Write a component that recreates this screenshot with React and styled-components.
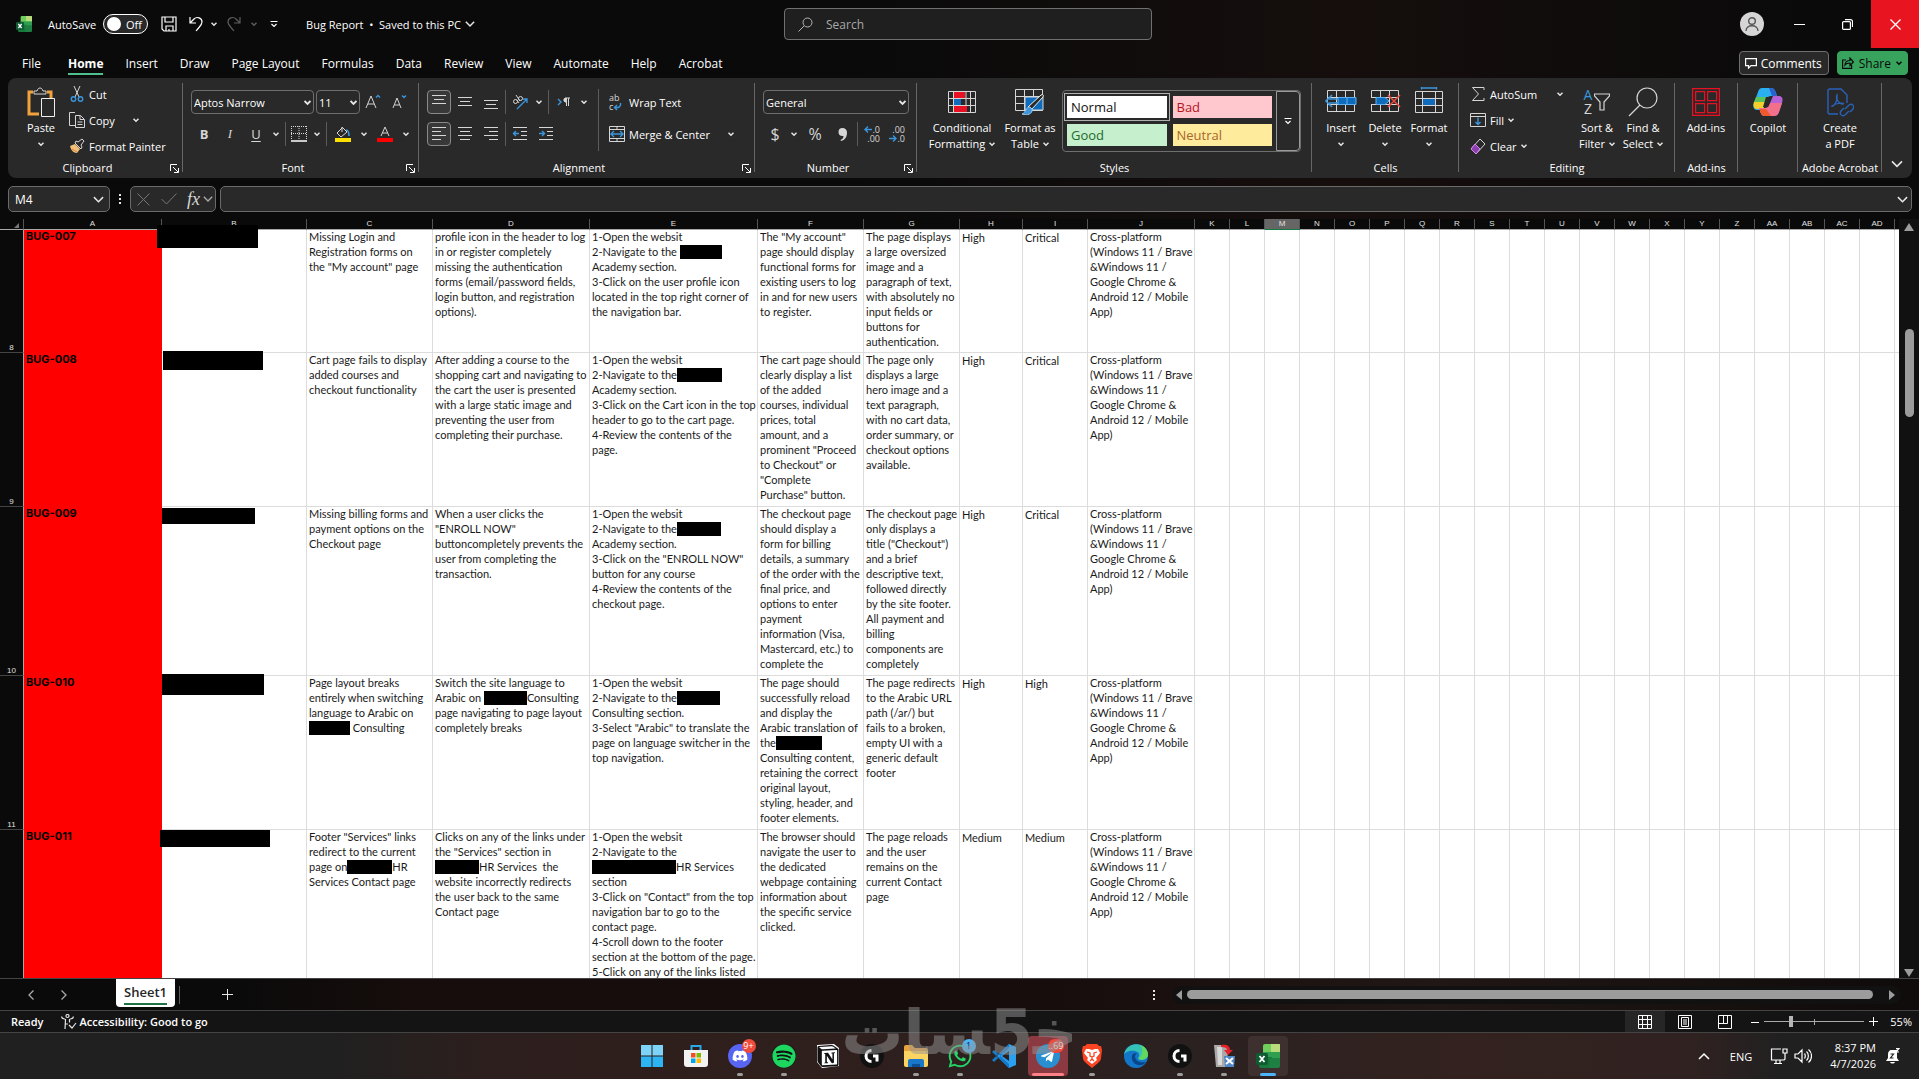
import React from "react";
import styled, { createGlobalStyle } from "styled-components";
import {
    FaDiscord,
    FaSpotify,
    FaWhatsapp,
    FaTelegramPlane,
} from "react-icons/fa";
import { SiNotion } from "react-icons/si";

const tabs = [
    "File",
    "Home",
    "Insert",
    "Draw",
    "Page Layout",
    "Formulas",
    "Data",
    "Review",
    "View",
    "Automate",
    "Help",
    "Acrobat",
];

const columns = [
    ["A", 138],
    ["B", 145],
    ["C", 126],
    ["D", 157],
    ["E", 168],
    ["F", 106],
    ["G", 96],
    ["H", 63],
    ["I", 65],
    ["J", 107],
    ..."K L M N O P Q R S T U V W X Y Z AA AB AC AD"
        .split(" ")
        .map((name) => [name, 35]),
];

const platform = [
    "Cross-platform",
    "(Windows 11 / Brave",
    "&Windows 11 /",
    "Google Chrome &",
    "Android 12 / Mobile",
    "App)",
];

// a line is a string, or a list of strings and widths of hidden words
const bugs = [
    {
        row: 8,
        height: 123,
        id: "BUG-007",
        mask: { left: -5, top: -5, width: 101, height: 23 },
        cells: [
            ["Missing Login and", "Registration forms on", 'the "My account" page'],
            [
                "profile icon in the header to log",
                "in or register completely",
                "missing the authentication",
                "forms (email/password fields,",
                "login button, and registration",
                "options).",
            ],
            [
                "1-Open the websit",
                ["2-Navigate to the ", 42],
                "Academy section.",
                "3-Click on the user profile icon",
                "located in the top right corner of",
                "the navigation bar.",
            ],
            [
                'The "My account"',
                "page should display",
                "functional forms for",
                "existing users to log",
                "in and for new users",
                "to register.",
            ],
            [
                "The page displays",
                "a large oversized",
                "image and a",
                "paragraph of text,",
                "with absolutely no",
                "input fields or",
                "buttons for",
                "authentication.",
            ],
            ["High"],
            ["Critical"],
            platform,
        ],
    },
    {
        row: 9,
        height: 154,
        id: "BUG-008",
        mask: { left: 1, top: -2, width: 100, height: 19 },
        cells: [
            ["Cart page fails to display", "added courses and", "checkout functionality"],
            [
                "After adding a course to the",
                "shopping cart and navigating to",
                "the cart the user is presented",
                "with a large static image and",
                "preventing the user from",
                "completing their purchase.",
            ],
            [
                "1-Open the websit",
                ["2-Navigate to the", 45],
                "Academy section.",
                "3-Click on the Cart icon in the top",
                "header to go to the cart page.",
                "4-Review the contents of the",
                "page.",
            ],
            [
                "The cart page should",
                "clearly display a list",
                "of the added",
                "courses, individual",
                "prices, total",
                "amount, and a",
                'prominent "Proceed',
                'to Checkout" or',
                '"Complete',
                'Purchase" button.',
            ],
            [
                "The page only",
                "displays a large",
                "hero image and a",
                "text paragraph,",
                "with no cart data,",
                "order summary, or",
                "checkout options",
                "available.",
            ],
            ["High"],
            ["Critical"],
            platform,
        ],
    },
    {
        row: 10,
        height: 169,
        id: "BUG-009",
        mask: { left: 0, top: 1, width: 93, height: 16 },
        cells: [
            ["Missing billing forms and", "payment options on the", "Checkout page"],
            [
                "When a user clicks the",
                '"ENROLL NOW"',
                "buttoncompletely prevents the",
                "user from completing the",
                "transaction.",
            ],
            [
                "1-Open the websit",
                ["2-Navigate to the", 44],
                "Academy section.",
                '3-Click on the "ENROLL NOW"',
                "button for any course",
                "4-Review the contents of the",
                "checkout page.",
            ],
            [
                "The checkout page",
                "should display a",
                "form for billing",
                "details, a summary",
                "of the order with the",
                "final price, and",
                "options to enter",
                "payment",
                "information (Visa,",
                "Mastercard, etc.) to",
                "complete the",
            ],
            [
                "The checkout page",
                "only displays a",
                'title ("Checkout")',
                "and a brief",
                "descriptive text,",
                "followed directly",
                "by the site footer.",
                "All payment and",
                "billing",
                "components are",
                "completely",
            ],
            ["High"],
            ["Critical"],
            platform,
        ],
    },
    {
        row: 11,
        height: 154,
        id: "BUG-010",
        mask: { left: 0, top: -2, width: 102, height: 21 },
        cells: [
            [
                "Page layout breaks",
                "entirely when switching",
                "language to Arabic on",
                [41, " Consulting"],
            ],
            [
                "Switch the site language to",
                ["Arabic on ", 43, "Consulting"],
                "page navigating to page layout",
                "completely breaks",
            ],
            [
                "1-Open the websit",
                ["2-Navigate to the", 43],
                "Consulting section.",
                '3-Select "Arabic" to translate the',
                "page on language switcher in the",
                "top navigation.",
            ],
            [
                "The page should",
                "successfully reload",
                "and display the",
                "Arabic translation of",
                ["the", 46],
                "Consulting content,",
                "retaining the correct",
                "original layout,",
                "styling, header, and",
                "footer elements.",
            ],
            [
                "The page redirects",
                "to the Arabic URL",
                "path (/ar/) but",
                "fails to a broken,",
                "empty UI with a",
                "generic default",
                "footer",
            ],
            ["High"],
            ["High"],
            platform,
        ],
    },
    {
        height: 169,
        id: "BUG-011",
        mask: { left: -2, top: 0, width: 110, height: 17 },
        cells: [
            [
                'Footer "Services" links',
                "redirect to the current",
                ["page on", 45, "HR"],
                "Services Contact page",
            ],
            [
                "Clicks on any of the links under",
                'the "Services" section in',
                [44, "HR Services  the"],
                "website incorrectly redirects",
                "the user back to the same",
                "Contact page",
            ],
            [
                "1-Open the websit",
                "2-Navigate to the",
                [84, "HR Services"],
                "section",
                '3-Click on "Contact" from the top',
                "navigation bar to go to the",
                "contact page.",
                "4-Scroll down to the footer",
                "section at the bottom of the page.",
                "5-Click on any of the links listed",
            ],
            [
                "The browser should",
                "navigate the user to",
                "the dedicated",
                "webpage containing",
                "information about",
                "the specific service",
                "clicked.",
            ],
            [
                "The page reloads",
                "and the user",
                "remains on the",
                "current Contact",
                "page",
            ],
            ["Medium"],
            ["Medium"],
            platform,
        ],
    },
];

function Icon({ w = 16, h = w, box, children, sw = 1, color = "#d6d6d6" }) {
    return (
        <Svg
            width={w}
            height={h}
            viewBox={box || `0 0 ${w} ${h}`}
            fill="none"
            stroke={color}
            strokeWidth={sw}
            aria-hidden="true"
        >
            {children}
        </Svg>
    );
}

function Chevron({ size = 6, color = "#e6e6e6", sw = 1.5 }) {
    return (
        <Icon w={size} h={size} box="0 0 6 6" sw={sw} color={color}>
            <path d="M.5 1.7 3 4.2l2.5-2.5" />
        </Icon>
    );
}

function Drop({ label }) {
    return (
        <DropButton aria-label={label}>
            <Chevron />
        </DropButton>
    );
}

function ExcelLogo({ size }) {
    return (
        <Icon w={size} box="0 0 24 24" sw={0}>
            <path d="M7 2a2 2 0 0 1 2-2h14a1 1 0 0 1 1 1v8H7z" fill="#6fcf5c" />
            <path d="M15 0h8a1 1 0 0 1 1 1v8h-9z" fill="#b8dc7c" />
            <path d="M7 8h17v8H7z" fill="#2f9e4f" />
            <path d="M3 13h13v11H5a2 2 0 0 1-2-2z" fill="#157a3c" />
            <path d="M14 14h10v8a2 2 0 0 1-2 2h-8z" fill="#1f8044" />
            <rect y="9" width="12" height="12" rx="2" fill="#0f5c33" />
            <path d="m3.5 12 5 6m0-6-5 6" stroke="#fff" strokeWidth="1.8" />
        </Icon>
    );
}

function Lines({ top, rows }) {
    return (
        <Icon w={16}>
            {rows.map(([x, width], i) => (
                <path key={i} d={`M${x} ${top + i * 4 + 0.5}h${width}`} />
            ))}
        </Icon>
    );
}

function Launcher({ label }) {
    return (
        <LauncherButton aria-label={label}>
            <Icon w={9} color="#fff">
                <path d="M.5 7V.5H7M3 3l5 5M8.5 4v4.5H4" />
            </Icon>
        </LauncherButton>
    );
}

function Group({ name, width, launcher, children }) {
    return (
        <GroupBox $w={width}>
            <GroupBody>{children}</GroupBody>
            <GroupName $launcher={launcher}>
                {name}
                {launcher && <Launcher label={`${name} settings`} />}
            </GroupName>
        </GroupBox>
    );
}

function Combo({ label, value, width }) {
    return (
        <ComboBox $w={width}>
            <select aria-label={label} defaultValue={value}>
                <option>{value}</option>
            </select>
            <Chevron size={7} />
        </ComboBox>
    );
}

function Big({ icon, top, bottom, width, drop }) {
    return (
        <BigButton $w={width}>
            <BigIcon>{icon}</BigIcon>
            <span>{top}</span>
            <span>
                {bottom}
                {drop && <Chevron />}
            </span>
        </BigButton>
    );
}

function TitleBar() {
    return (
        <TitleRow>
            <TitleLeft>
                <ExcelLogo size={16} />
                <AutoSave>
                    AutoSave
                    <Toggle>
                        <input type="checkbox" aria-label="AutoSave" />
                        Off
                    </Toggle>
                </AutoSave>
                <QuickButton aria-label="Save" $w={32}>
                    <Icon w={16} color="#fff" sw={1.2}>
                        <path d="M1 1h14v14H3l-2-2zM4 1v5h8V1M5 15v-5h7v5M8 13v2" />
                    </Icon>
                </QuickButton>
                <QuickButton aria-label="Undo" $w={22}>
                    <Icon w={16} color="#fff" sw={1.2}>
                        <path d="M2 1v6h6M2 7l4-4c3-3 8-1 8 3 0 3-2 4-6 9" />
                    </Icon>
                </QuickButton>
                <Drop label="Undo list" />
                <QuickButton aria-label="Redo" $w={26}>
                    <Icon w={16} color="#5c5c5c" sw={1.2}>
                        <path d="M14 1v6H8m6 0-4-4C7 0 2 2 2 6c0 3 2 4 6 9" />
                    </Icon>
                </QuickButton>
                <DropButton aria-label="Redo list">
                    <Chevron color="#5c5c5c" />
                </DropButton>
                <QuickButton aria-label="Customize toolbar" $w={26}>
                    <Icon w={8} color="#fff" sw={1.2}>
                        <path d="M.5 1.5h7M1.5 4 4 6.5 6.5 4" />
                    </Icon>
                </QuickButton>
                <FileName>
                    Bug Report&nbsp; • &nbsp;Saved to this PC
                    <Chevron size={10} sw={0.9} />
                </FileName>
            </TitleLeft>
            <SearchBox>
                <Icon w={15} color="#b5b5b5">
                    <circle cx="9.5" cy="5.5" r="4.5" />
                    <path d="M6 9 .5 14.5" />
                </Icon>
                <input type="search" aria-label="Search" placeholder="Search" />
            </SearchBox>
            <WindowButtons>
                <Avatar aria-label="Account">
                    <Icon w={14} color="#555" sw={1.4}>
                        <circle cx="7" cy="4" r="3.3" />
                        <path d="M1 14c0-7 12-7 12 0" />
                    </Icon>
                </Avatar>
                <WindowButton aria-label="Minimize">
                    <Icon w={11} color="#fff">
                        <path d="M0 5.5h11" />
                    </Icon>
                </WindowButton>
                <WindowButton aria-label="Restore">
                    <Icon w={11} color="#fff" sw={1.2}>
                        <rect x=".6" y="2.6" width="7.8" height="7.8" rx="1" />
                        <path d="M3 .6h5.5a2 2 0 0 1 2 2V8" />
                    </Icon>
                </WindowButton>
                <WindowButton aria-label="Close" $close>
                    <Icon w={11} color="#fff" sw={1.3}>
                        <path d="m.5.5 10 10m0-10-10 10" />
                    </Icon>
                </WindowButton>
            </WindowButtons>
        </TitleRow>
    );
}

function ClipboardGroup() {
    return (
        <Group name="Clipboard" width={175} launcher>
            <Inset $left={11}>
                <Big
                    width={44}
                    top="Paste"
                    drop
                    icon={
                        <Icon w={28} h={30}>
                            <path d="M6 5H2v22h10M20 5h4v6" stroke="#f0a23c" strokeWidth="3" />
                            <path d="M7 7V4h3c1-4 5-4 6 0h3v3z" fill="#292929" />
                            <path d="M14.5 11.5h13v18h-13z" fill="#292929" stroke="#eee" />
                        </Icon>
                    }
                />
            </Inset>
            <SmallColumn $left={6}>
                <SmallButton>
                    <Icon w={16}>
                        <path d="m5 0 5 11M11 0 6 11" />
                        <circle cx="4.5" cy="13" r="2.2" stroke="#3a96dd" strokeWidth="1.4" />
                        <circle cx="11.5" cy="13" r="2.2" stroke="#3a96dd" strokeWidth="1.4" />
                    </Icon>
                    Cut
                </SmallButton>
                <SmallButton $gap={14}>
                    <Icon w={16}>
                        <path d="M6 13.5H.5V.5H6M6.5 3.5h5l4 4v8h-9zM11 3.5v4h4M8.5 10h5M8.5 12.5h5" />
                    </Icon>
                    Copy
                    <Chevron />
                </SmallButton>
                <SmallButton>
                    <Icon w={16}>
                        <path d="M1 8l5-2 5 5-3 4c-4 0-6-3-7-7z" fill="#f0c07a" stroke="none" />
                        <path d="m6 5 6 6 1-2-1-2 3-4-2-2-4 3-2-1z" />
                        <path d="m3 11 5 3" stroke="#d9822b" />
                    </Icon>
                    Format Painter
                </SmallButton>
            </SmallColumn>
        </Group>
    );
}

function FontGroup() {
    return (
        <Group name="Font" width={236} launcher>
            <ToolRows $left={8}>
                <ToolRow>
                    <Combo label="Font" value="Aptos Narrow" width={123} />
                    <Combo label="Font size" value="11" width={44} />
                    <ToolButton aria-label="Increase font size" $w={26}>
                        <Icon w={16}>
                            <path d="M1 14 6 2l5 12M3 10h6" />
                            <path d="m11 3.5 2-2 2 2" stroke="#3a96dd" strokeWidth="1.3" />
                        </Icon>
                    </ToolButton>
                    <ToolButton aria-label="Decrease font size" $w={26}>
                        <Icon w={16}>
                            <path d="M2 14 6 4l4 10M3.5 11h5" />
                            <path d="m11 1.5 2 2 2-2" stroke="#3a96dd" strokeWidth="1.3" />
                        </Icon>
                    </ToolButton>
                </ToolRow>
                <ToolRow>
                    <Letter $w={26} $bold>B</Letter>
                    <Letter $w={26} $italic>I</Letter>
                    <Letter $w={26} $underline>U</Letter>
                    <Drop label="Underline style" />
                    <Sep />
                    <ToolButton aria-label="Borders" $w={22}>
                        <Icon w={16}>
                            <path d="M.5 0v14M15.5 0v14M8 0v14M0 .5h16M0 7.5h16" strokeDasharray="1 1" />
                            <path d="M0 15h16" stroke="#fff" strokeWidth="1.5" />
                        </Icon>
                    </ToolButton>
                    <Drop label="Border style" />
                    <Sep />
                    <ToolButton aria-label="Fill color" $w={28}>
                        <Icon w={16}>
                            <path d="M7 2 2 7l4 4 6-5-5-5v5" />
                            <path d="M11 4c3 0 3 3 3 6" stroke="#3a96dd" strokeWidth="1.6" />
                            <path d="M0 14h16" stroke="#fce100" strokeWidth="4" />
                        </Icon>
                    </ToolButton>
                    <Drop label="Fill colors" />
                    <ToolButton aria-label="Font color" $w={28}>
                        <Icon w={16}>
                            <path d="m4 10 4-9 4 9M5.5 7h5" />
                            <path d="M0 14h16" stroke="#f00" strokeWidth="4" />
                        </Icon>
                    </ToolButton>
                    <Drop label="Font colors" />
                </ToolRow>
            </ToolRows>
        </Group>
    );
}

function AlignmentGroup() {
    return (
        <Group name="Alignment" width={336} launcher>
            <ToolRows $left={8}>
                <ToolRow>
                    <ToolButton aria-label="Top align" $w={24} $on>
                        <Lines top={1} rows={[[1, 14], [3, 10], [1, 14]]} />
                    </ToolButton>
                    <ToolButton aria-label="Middle align" $w={28}>
                        <Lines top={3} rows={[[1, 14], [3, 10], [1, 14]]} />
                    </ToolButton>
                    <ToolButton aria-label="Bottom align" $w={24}>
                        <Lines top={6} rows={[[1, 14], [3, 10], [1, 14]]} />
                    </ToolButton>
                    <Sep />
                    <ToolButton aria-label="Orientation" $w={24}>
                        <Icon w={16}>
                            <circle cx="3.5" cy="7.5" r="2" />
                            <path d="m5 6 2 3M4 1l4 6" />
                            <circle cx="8.5" cy="4.5" r="2" />
                            <path d="M5 15 15 5M11 5h4v4" stroke="#3a96dd" strokeWidth="1.3" />
                        </Icon>
                    </ToolButton>
                    <Drop label="Orientation list" />
                    <Sep />
                    <ToolButton aria-label="Text direction" $w={26}>
                        <Icon w={16}>
                            <path d="m2 5 3 3-3 3" stroke="#3a96dd" strokeWidth="1.4" />
                            <path d="M14 4h-4a2 2 0 0 0 0 4M10.5 4v8M12.5 4v8" />
                            <path d="M10 4v4a2 2 0 0 1 0-4z" fill="#d6d6d6" />
                        </Icon>
                    </ToolButton>
                    <Drop label="Text directions" />
                </ToolRow>
                <ToolRow>
                    <ToolButton aria-label="Align left" $w={24} $on>
                        <Lines top={1} rows={[[1, 14], [1, 9], [1, 14], [1, 9]]} />
                    </ToolButton>
                    <ToolButton aria-label="Center" $w={28}>
                        <Lines top={1} rows={[[1, 14], [3, 10], [1, 14], [3, 10]]} />
                    </ToolButton>
                    <ToolButton aria-label="Align right" $w={24}>
                        <Lines top={1} rows={[[1, 14], [6, 9], [1, 14], [6, 9]]} />
                    </ToolButton>
                    <Sep />
                    <ToolButton aria-label="Decrease indent" $w={24}>
                        <Icon w={16}>
                            <path d="M1 1.5h14M9 5.5h6M9 9.5h6M1 13.5h14" />
                            <path d="M7 7.5H1M4 5 1.5 7.5 4 10" stroke="#3a96dd" strokeWidth="1.4" />
                        </Icon>
                    </ToolButton>
                    <ToolButton aria-label="Increase indent" $w={28}>
                        <Icon w={16}>
                            <path d="M1 1.5h14M9 5.5h6M9 9.5h6M1 13.5h14" />
                            <path d="M1 7.5h6M4 5l2.5 2.5L4 10" stroke="#3a96dd" strokeWidth="1.4" />
                        </Icon>
                    </ToolButton>
                </ToolRow>
            </ToolRows>
            <LongSep />
            <ToolRows $left={10}>
                <ToolRow>
                    <SmallButton>
                        <TextIcon>
                            <span>ab</span>
                            <span>
                                c
                                <Icon w={9} h={8} color="#3a96dd" sw={1.4}>
                                    <path d="M7.5 0v2.5L5.5 4.5h-4M4 2 1.5 4.5 4 7" />
                                </Icon>
                            </span>
                        </TextIcon>
                        Wrap Text
                    </SmallButton>
                </ToolRow>
                <ToolRow>
                    <SmallButton $gap={14}>
                        <Icon w={16}>
                            <path d="M.5.5h15v15H.5zM8 0v3M8 13v3M0 3.5h16M0 12.5h16" />
                            <path d="M2 8h12M5 5 2 8l3 3M11 5l3 3-3 3" stroke="#3a96dd" strokeWidth="1.4" />
                        </Icon>
                        Merge &amp; Center
                        <Chevron />
                    </SmallButton>
                </ToolRow>
            </ToolRows>
        </Group>
    );
}

function Arrow({ left }) {
    return (
        <Icon w={8} h={7} color="#3a96dd" sw={1.4}>
            <path d={left ? "M8 3.5H1M4 .5l-3 3 3 3" : "M0 3.5h7M4 .5l3 3-3 3"} />
        </Icon>
    );
}

function NumberGroup() {
    return (
        <Group name="Number" width={162} launcher>
            <ToolRows $left={8}>
                <ToolRow>
                    <Combo label="Number format" value="General" width={146} />
                </ToolRow>
                <ToolRow>
                    <Letter $w={24} $size={16}>$</Letter>
                    <Drop label="Currencies" />
                    <Letter $w={28} $size={16}>%</Letter>
                    <ToolButton aria-label="Comma style" $w={26}>
                        <Icon w={9} h={13} color="none">
                            <path
                                d="M4.5 0a4 4 0 0 0 0 8h1c0 2-1 3-3 4l.5 1c4-1 6-4 6-8.5C9 1.5 7 0 4.5 0z"
                                fill="#d6d6d6"
                            />
                        </Icon>
                    </ToolButton>
                    <Sep />
                    <ToolButton aria-label="Increase decimal" $w={24}>
                        <TextIcon $end>
                            <span><Arrow left />.0</span>
                            <span>.00</span>
                        </TextIcon>
                    </ToolButton>
                    <ToolButton aria-label="Decrease decimal" $w={26}>
                        <TextIcon $end>
                            <span>.00</span>
                            <span><Arrow />.0</span>
                        </TextIcon>
                    </ToolButton>
                </ToolRow>
            </ToolRows>
        </Group>
    );
}

function StylesGroup() {
    return (
        <Group name="Styles" width={395}>
            <Inset $left={5}>
                <Big
                    width={80}
                    top="Conditional"
                    bottom="Formatting"
                    drop
                    icon={
                        <Icon w={28} h={22}>
                            <path d="M.5.5h27v21H.5zM.5 7.5h27M.5 14.5h27M5.5 0v22M18 0v22M22.5 0v22" />
                            <path d="M6 1h11v6H6zM6 15h13v6H6z" fill="#e81123" stroke="none" />
                            <path d="M6 8h7v6H6z" fill="#0f6cbd" stroke="none" />
                        </Icon>
                    }
                />
                <Big
                    width={56}
                    top="Format as"
                    bottom="Table"
                    drop
                    icon={
                        <Icon w={30} h={26} box="0 -2 30 26">
                            <path d="M.5-1.5h27v21H.5zM.5 5.5h27M.5 12.5h27M9.5-2v22M18.5-2v22" />
                            <path d="M10 6h18v13H10z" fill="#0f6cbd" />
                            <path d="M28 6 16 19l-3-3L26 4c2-1 3 0 2 2z" fill="#292929" stroke="#eee" />
                            <path d="M15 16c-4-1-4 6-8 7 5 2 11 0 10-5z" fill="#3a96dd" stroke="#9cc8ee" />
                        </Icon>
                    }
                />
            </Inset>
            <Gallery>
                <GalleryTiles>
                    <StyleTile $bg="#ffffff" $color="#111" $on>Normal</StyleTile>
                    <StyleTile $bg="#ffc7ce" $color="#b3151c">Bad</StyleTile>
                    <StyleTile $bg="#c6efce" $color="#1c6b2c">Good</StyleTile>
                    <StyleTile $bg="#ffeb9c" $color="#a8662a">Neutral</StyleTile>
                </GalleryTiles>
                <GalleryMore aria-label="More styles">
                    <Icon w={8} color="#fff" sw={1.2}>
                        <path d="M.5 1.5h7M1.5 4 4 6.5 6.5 4" />
                    </Icon>
                </GalleryMore>
            </Gallery>
        </Group>
    );
}

function CellsGroup() {
    const table = "M2.5 3.5h27v21h-27zM2.5 10.5h27M2.5 17.5h27M11.5 3v22M20.5 3v22";
    return (
        <Group name="Cells" width={147}>
            <Inset $left={7}>
                <Big
                    width={44}
                    top="Insert"
                    drop
                    icon={
                        <Icon w={32} h={30}>
                            <path d={table} />
                            <path d="M13 10.5h18v7H13zM22 10v7" fill="#0f6cbd" stroke="#5fb0f0" />
                            <path d="M14 12H4m10 4H4M7 8l-6 6 6 6" stroke="#3a96dd" strokeWidth="1.6" />
                        </Icon>
                    }
                />
                <Big
                    width={44}
                    top="Delete"
                    drop
                    icon={
                        <Icon w={32} h={30}>
                            <path d={table} />
                            <path d="M1 11h5v6H1z" fill="#292929" stroke="none" />
                            <path d="M7 10.5h9l4 3.5-4 3.5H7z" fill="#0f6cbd" stroke="#5fb0f0" />
                            <path d="m19 8 12 12M31 8 19 20" stroke="#f0483e" strokeWidth="1.5" />
                        </Icon>
                    }
                />
                <Big
                    width={44}
                    top="Format"
                    drop
                    icon={
                        <Icon w={30} h={30} box="1 1 30 30">
                            <path d="M2.5 5.5h27v21h-27zM2.5 12.5h27M2.5 19.5h27M9.5 5v22M22.5 5v22" />
                            <path d="M10 13h12v6H10z" fill="#0f6cbd" stroke="none" />
                            <path d="M8 2h16M8.5 1v2.5M23.5 1v2.5" stroke="#3a96dd" strokeWidth="1.4" />
                        </Icon>
                    }
                />
            </Inset>
        </Group>
    );
}

function EditingGroup() {
    return (
        <Group name="Editing" width={216}>
            <SmallColumn $left={11} $w={104}>
                <SmallButton $gap={16}>
                    <Icon w={16}>
                        <path d="M14 4V1.5H2.5L8.5 8l-6 6.5H14V12" />
                    </Icon>
                    AutoSum
                    <Chevron />
                </SmallButton>
                <SmallButton>
                    <Icon w={16}>
                        <path d="M.5 1.5h15v13H.5zM.5 4.5h15" />
                        <path d="M8 5.5v7M5.5 10 8 12.5l2.5-2.5" stroke="#3a96dd" strokeWidth="1.4" />
                    </Icon>
                    Fill
                    <Chevron />
                </SmallButton>
                <SmallButton>
                    <Icon w={16}>
                        <path d="m1 11 9-10 5 5-9 10z" />
                        <path d="m1 11 4-5 5 5-4 5z" fill="#8b3fb0" stroke="#d58ae8" />
                    </Icon>
                    Clear
                    <Chevron />
                </SmallButton>
            </SmallColumn>
            <Big
                width={46}
                top="Sort &"
                bottom="Filter"
                drop
                icon={
                    <SortIcon>
                        <p>
                            <b>A</b>
                            <br />Z
                        </p>
                        <Icon w={16} h={18} sw={1.2}>
                            <path d="M.5 1h15v2l-5.5 6v8H6V9L.5 3z" />
                        </Icon>
                    </SortIcon>
                }
            />
            <Big
                width={46}
                top="Find &"
                bottom="Select"
                drop
                icon={
                    <Icon w={30} sw={1.2}>
                        <circle cx="19" cy="11" r="10" />
                        <path d="M12 18 1 29" />
                    </Icon>
                }
            />
        </Group>
    );
}

function Ribbon() {
    return (
        <RibbonBox>
            <ClipboardGroup />
            <FontGroup />
            <AlignmentGroup />
            <NumberGroup />
            <StylesGroup />
            <CellsGroup />
            <EditingGroup />
            <Group name="Add-ins" width={63}>
                <Big
                    width={62}
                    top="Add-ins"
                    icon={
                        <Icon w={28} color="#e81123" sw={1.2}>
                            <path d="M.6.6h26.8v26.8H.6zM3.6 3.6h9v9h-9zM15.6 3.6h9v9h-9zM3.6 15.6h9v9h-9zM15.6 15.6h9v9h-9z" />
                        </Icon>
                    }
                />
            </Group>
            <Group name="" width={60}>
                <Big
                    width={60}
                    top="Copilot"
                    icon={
                        <Icon w={30} h={28} sw={0}>
                            <path d="M9 0h9c3 0 4 2 5 5l1 3h-6c-3 0-4 2-5 5l-3 9H4c-4 0-4-4-3-7L5 4c1-3 2-4 4-4z" fill="#2ab0f0" />
                            <path d="M3 9h12l-5 12H4c-4 0-4-4-3-7z" fill="#5cc25a" />
                            <path d="M1 14h11l-2 7H4c-3 0-4-3-3-7z" fill="#f5d02c" />
                            <path d="M20 8h6c4 0 4 4 3 7l-3 9c-1 3-3 4-5 4h-9c-3 0-4-2-5-5l-1-3h6c3 0 4-2 5-5z" fill="#b562d8" />
                            <path d="M17 15h12l-3 9c-1 3-3 4-5 4h-9c-3 0-4-2-5-5l-1-3h6c3 0 4-2 5-5z" fill="#f2708c" />
                            <path d="M7 21h6l5 7h-6c-3 0-4-2-5-5z" fill="#ee5a2c" />
                            <path d="m13 9-3 10h5c1-1 3-8 4-10z" fill="#292929" />
                            <path d="M16 0h2c3 0 4 2 5 5l1 3h-5z" fill="#2a62d0" />
                        </Icon>
                    }
                />
            </Group>
            <Group name="Adobe Acrobat" width={84}>
                <Big
                    width={84}
                    top="Create"
                    bottom="a PDF"
                    icon={
                        <Icon w={28} h={30} color="#2a62b8" sw={1.4}>
                            <path d="M12 27H4a2 2 0 0 1-2-2V4a2 2 0 0 1 2-2h11l6 6v8" />
                            <path d="M11 8c-2 4 3 10 6 9s-6-2-11 2c2 1 6-6 5-11z" />
                            <path d="m19 22 4-4c3-2 6 1 4 4l-3 3M23 24l-4 4c-3 2-6-1-4-4l3-3" />
                        </Icon>
                    }
                />
            </Group>
            <Collapse aria-label="Collapse ribbon">
                <Chevron size={12} sw={0.8} />
            </Collapse>
        </RibbonBox>
    );
}

function FormulaBar() {
    return (
        <FormulaRow>
            <NameBox>
                <input aria-label="Name box" defaultValue="M4" />
                <Chevron size={11} sw={0.8} />
            </NameBox>
            <Dots>
                <i />
                <i />
                <i />
            </Dots>
            <FormulaTools>
                <button aria-label="Cancel">
                    <Icon w={13} color="#777">
                        <path d="m.5.5 12 12m0-12-12 12" />
                    </Icon>
                </button>
                <button aria-label="Enter">
                    <Icon w={16} h={12} color="#777">
                        <path d="m.5 6 5 5L15.5.5" />
                    </Icon>
                </button>
                <button aria-label="Insert function">
                    <em>fx</em>
                    <Chevron size={10} sw={0.8} color="#aaa" />
                </button>
            </FormulaTools>
            <FormulaInput>
                <input aria-label="Formula" />
                <Chevron size={11} sw={0.8} />
            </FormulaInput>
        </FormulaRow>
    );
}

function CellText({ content }) {
    return content.map((line, i) => (
        <TextLine key={i}>
            {[].concat(line).map((part, n) =>
                typeof part === "number" ? <Redacted key={n} $w={part} /> : part
            )}
        </TextLine>
    ));
}

function Sheet() {
    return (
        <SheetArea>
            <SheetScroll>
                <Table>
                    <colgroup>
                        <Col $w={24} />
                        {columns.map(([name, width]) => (
                            <Col key={name} $w={width} />
                        ))}
                        <Col $w={35} />
                    </colgroup>
                    <thead>
                        <tr>
                            <Corner aria-label="Select all">
                                <Icon w={5} color="none">
                                    <path d="M5 0v5H0z" fill="#777" />
                                </Icon>
                            </Corner>
                            {columns.map(([name]) => (
                                <ColHead key={name} $active={name === "M"}>
                                    {name}
                                </ColHead>
                            ))}
                            <ColHead />
                        </tr>
                    </thead>
                    <tbody>
                        {bugs.map((bug) => (
                            <Row key={bug.id} $h={bug.height}>
                                <RowHead>{bug.row}</RowHead>
                                <IdCell>{bug.id}</IdCell>
                                <Cell>
                                    <Mask $box={bug.mask} />
                                </Cell>
                                {bug.cells.map((content, i) => (
                                    <Cell key={i} $level={content.length === 1}>
                                        <CellText content={content} />
                                    </Cell>
                                ))}
                                {Array.from({ length: 21 }, (_, i) => (
                                    <Cell key={`empty-${i}`} />
                                ))}
                            </Row>
                        ))}
                    </tbody>
                </Table>
            </SheetScroll>
            <VerticalBar>
                <Icon w={10} h={8} color="none">
                    <path d="M5 0l5 8H0z" fill="#9c9c9c" />
                </Icon>
                <VerticalThumb />
                <Icon w={10} h={8} color="none">
                    <path d="M0 0h10L5 8z" fill="#9c9c9c" />
                </Icon>
            </VerticalBar>
        </SheetArea>
    );
}

function SheetTabs() {
    return (
        <SheetTabRow>
            <SheetNav>
                <button aria-label="Previous sheet">
                    <Icon w={6} h={10} color="#aaa" sw={1.3}>
                        <path d="M5.5.5 1 5l4.5 4.5" />
                    </Icon>
                </button>
                <button aria-label="Next sheet">
                    <Icon w={6} h={10} color="#aaa" sw={1.3}>
                        <path d="M.5.5 5 5 .5 9.5" />
                    </Icon>
                </button>
            </SheetNav>
            <SheetTab>
                <span>Sheet1</span>
            </SheetTab>
            <AddSheet aria-label="New sheet">
                <Icon w={11} color="#e6e6e6">
                    <path d="M5.5 0v11M0 5.5h11" />
                </Icon>
            </AddSheet>
            <Dots>
                <i />
                <i />
                <i />
            </Dots>
            <HorizontalBar>
                <Icon w={6} h={10} color="none">
                    <path d="M6 0v10L0 5z" fill="#9c9c9c" />
                </Icon>
                <HorizontalThumb />
                <Icon w={6} h={10} color="none">
                    <path d="M0 0v10l6-5z" fill="#9c9c9c" />
                </Icon>
            </HorizontalBar>
        </SheetTabRow>
    );
}

function StatusBar() {
    return (
        <StatusRow>
            <span>Ready</span>
            <Accessibility>
                <Icon w={16} color="#e6e6e6" sw={1.2}>
                    <circle cx="6.5" cy="2" r="1.5" />
                    <path d="M1 2.5c-1 2 2 2 3.5 3L4 15M12 2.5c1 2-2 2-3.5 3v3M4 10h3M8 11l3 3 4-5" />
                </Icon>
                Accessibility: Good to go
            </Accessibility>
            <ViewButton aria-label="Normal view" $on>
                <Icon w={14} color="#fff">
                    <path d="M.5.5h13v13H.5zM4.5.5v13M9.5.5v13M.5 4.5h13M.5 9.5h13" />
                </Icon>
            </ViewButton>
            <ViewButton aria-label="Page layout view">
                <Icon w={14} color="#fff">
                    <path d="M.5.5h13v13H.5zM3.5 2.5h7v9h-7zM5 5h4M5 7h4M5 9h4" />
                </Icon>
            </ViewButton>
            <ViewButton aria-label="Page break view">
                <Icon w={14} color="#fff">
                    <path d="M.5.5h13v13H.5zM.5 8.5h9V.5M5.5.5v8" />
                </Icon>
            </ViewButton>
            <Zoom>
                <button aria-label="Zoom out">
                    <Icon w={8} color="#fff">
                        <path d="M0 4.5h8" />
                    </Icon>
                </button>
                <input type="range" aria-label="Zoom" defaultValue="26" />
                <button aria-label="Zoom in">
                    <Icon w={9} color="#fff">
                        <path d="M0 4.5h9M4.5 0v9" />
                    </Icon>
                </button>
                <span>55%</span>
            </Zoom>
        </StatusRow>
    );
}

function LogiG() {
    return (
        <Icon w={24} color="#fff" sw={3}>
            <circle cx="12" cy="12" r="12" fill="#111" stroke="none" />
            <path d="M11.5 6.5a5.5 5.5 0 0 0 0 11M13 12h4v5.5" />
        </Icon>
    );
}

const Svg = styled.svg`
    display: block;
    flex: none;
`;

const Disc = styled.span`
    display: grid;
    place-items: center;
    width: 24px;
    height: 24px;
    border-radius: 50%;
    background: ${(p) => p.$bg};
    color: ${(p) => p.$color || "#fff"};
`;

const apps = [
    {
        name: "Start",
        icon: (
            <Icon w={24} color="none">
                <path d="M1 1h10.5v10.5H1zM12.5 1H23v10.5H12.5z" fill="#7ed3f8" />
                <path d="M1 12.5h10.5V23H1zM12.5 12.5H23V23H12.5z" fill="#2db4f5" />
            </Icon>
        ),
    },
    {
        name: "Store",
        icon: (
            <Icon w={24} color="none">
                <path d="M7.5 6V2h9v4" stroke="#29a9ea" strokeWidth="2" />
                <path d="M0 6h24v14a3 3 0 0 1-3 3H3a3 3 0 0 1-3-3z" fill="#f2f2f2" />
                <path d="M7 9h4.5v4.5H7z" fill="#f25022" />
                <path d="M12.5 9H17v4.5h-4.5z" fill="#7fba00" />
                <path d="M7 14.5h4.5V19H7z" fill="#00a4ef" />
                <path d="M12.5 14.5H17V19h-4.5z" fill="#ffb900" />
            </Icon>
        ),
    },
    {
        name: "Discord",
        icon: (
            <Disc $bg="#5865f2">
                <FaDiscord size={16} />
            </Disc>
        ),
        badge: "9+",
        run: true,
    },
    {
        name: "Spotify",
        icon: (
            <Disc $bg="#111" $color="#1ed760">
                <FaSpotify size={24} />
            </Disc>
        ),
        run: true,
    },
    {
        name: "Notion",
        icon: (
            <Icon w={24} color="none">
                <path d="M1 1 18 0l5 4v18L6 24l-5-6z" fill="#fff" />
                <SiNotion x="1" y="1" size={22} color="#111" />
            </Icon>
        ),
    },
    { name: "G HUB", icon: <LogiG /> },
    {
        name: "Files",
        icon: (
            <Icon w={24} color="none">
                <path d="M0 3a2 2 0 0 1 2-2h6l3 3h11a2 2 0 0 1 2 2v14H0z" fill="#e8a33d" />
                <path d="M0 7h24v14a2 2 0 0 1-2 2H2a2 2 0 0 1-2-2z" fill="#fcd462" />
                <path d="M4 23v-6a2 2 0 0 1 2-2h12a2 2 0 0 1 2 2v6z" fill="#1a76c8" />
                <path d="M8 20h8v3H8z" fill="#0d4f94" />
            </Icon>
        ),
        run: true,
    },
    {
        name: "WhatsApp",
        icon: <FaWhatsapp size={26} color="#25d366" />,
        badge: "1",
        blue: true,
        run: true,
    },
    {
        name: "VS Code",
        icon: (
            <Icon w={24} color="none">
                <path d="m17 0 7 3v18l-7 3L5 12z" fill="#2ba0ee" />
                <path d="M17 7v10l-7-5z" fill="#2b2120" />
                <path d="M2 6 17 20v4L0 8zM2 18 17 4V0L0 16z" fill="#1478c8" />
            </Icon>
        ),
    },
    {
        name: "Telegram",
        icon: (
            <Disc $bg="#2a8fd0">
                <FaTelegramPlane size={15} />
            </Disc>
        ),
        badge: "..69",
        alert: true,
        run: true,
    },
    {
        name: "Brave",
        icon: (
            <Icon w={24} color="none">
                <path d="M7 0h10l2 2h2l1 4-1 8c0 3-3 5-9 10-6-5-9-7-9-10L2 6l1-4h2z" fill="#fb4422" />
                <path d="M6 5h3l3 1 3-1h3l2 4-4 5 1 2-5 4-5-4 1-2-4-5z" fill="#fff" />
                <path
                    d="M7 8l3 1v3l2 1 2-1V9l3-1M12 13v2l-2 2M12 15l2 2"
                    stroke="#fb4422"
                    strokeWidth="1.3"
                />
            </Icon>
        ),
        run: true,
    },
    {
        name: "Edge",
        icon: (
            <Icon w={24} color="none">
                <circle cx="12" cy="12" r="12" fill="#1377c9" />
                <path d="M0 11C2-3 22-3 24 10c0 4-3 6-7 6-2 0-3-1-3-2 2-2 2-6-3-7C6 6 1 8 0 11z" fill="#35c1b5" />
                <path d="M17 1.5c4 1 7 5 7 9 0 3-3 5-6 5-2 0-3 0-3-1 4-4 4-9 2-13z" fill="#62d95c" />
                <path d="M8 12c-1 5 3 10 9 9 2 0 4-2 5-3-4 1-10 0-11-5 0-2 1-3 2-4-3 0-5 1-5 3z" fill="#0a458c" />
            </Icon>
        ),
    },
    { name: "G HUB agent", icon: <LogiG />, run: true },
    {
        name: "Recorder",
        icon: (
            <Icon w={24} color="none">
                <path d="M2 1h11l3 5-1 17H4z" fill="#a9a9a9" />
                <path d="M5 3h5v18H6z" fill="#d8d8d8" />
                <path d="M12 12h11l-1 11h-9z" fill="#4f86c6" />
                <path d="m14 14 7 6m0-6-7 6" stroke="#fff" strokeWidth="2" />
                <path d="M9 1c6-1 9 1 9 5h3l-5 5-4-5h3c0-2-2-3-6-3z" fill="#e8202a" />
            </Icon>
        ),
        run: true,
    },
    { name: "Excel", icon: <ExcelLogo size={24} />, active: true, run: true },
];

function Taskbar() {
    return (
        <TaskRow>
            <span />
            <Apps>
                {apps.map((app) => (
                    <AppButton
                        key={app.name}
                        aria-label={app.name}
                        $active={app.active}
                        $alert={app.alert}
                    >
                        {app.icon}
                        {app.badge && <Badge $blue={app.blue}>{app.badge}</Badge>}
                        {app.run && <Running $active={app.active} $alert={app.alert} />}
                    </AppButton>
                ))}
            </Apps>
            <Tray>
                <button aria-label="Hidden icons">
                    <Icon w={12} h={8} color="#fff" sw={1.5}>
                        <path d="m1 7 5-5 5 5" />
                    </Icon>
                </button>
                <span>ENG</span>
                <TrayIcons>
                    <Icon w={18} color="#fff" sw={1.2}>
                        <path d="M11 2H1.5v11H13M4 16.5h8M6 13v3M10 13v3M13 2h4v4h-4zM15 6v6c0 1-1 1-2 1" />
                    </Icon>
                    <Icon w={18} color="#fff" sw={1.2}>
                        <path d="M1 7v4h3l4 4V3L4 7zM10.5 6.5c1 1 1 4 0 5M12.5 4.5c2.5 2 2.5 7 0 9M14.5 2.5c4 3 4 10 0 13" />
                    </Icon>
                </TrayIcons>
                <Clock>
                    <span>8:37 PM</span>
                    <span>4/7/2026</span>
                </Clock>
                <Icon w={14} h={16} color="none">
                    <path d="M6 2c-3 0-4 2-4 5v3l-2 3h13l-2-3V2zM4 14h5c-1 2-4 2-5 0z" fill="#fff" />
                    <path d="M4.5 6h3l-3 4h3" stroke="#222" strokeWidth="1.2" />
                    <path d="M10 .6h3L10 4h3" stroke="#fff" strokeWidth="1.2" />
                </Icon>
            </Tray>
        </TaskRow>
    );
}

function App() {
    return (
        <Page>
            <GlobalStyle />
            <TitleBar />
            <TabRow>
                {tabs.map((tab) => (
                    <TabButton key={tab} $on={tab === "Home"}>
                        {tab}
                    </TabButton>
                ))}
                <Comments>
                    <Icon w={12} color="#fff" sw={1.2}>
                        <path d="M.6 1.6h10.8v7H6l-2.5 2.5V8.6H.6z" />
                    </Icon>
                    Comments
                </Comments>
                <Share>
                    <Icon w={12} color="#0a0a0a" sw={1.2}>
                        <path d="M4 3H.6v8.4h9V8M3 8c0-3 2-4.5 5-4.5V1l3.5 4L8 8.500V6C6 6 4 6.500 3 8z" />
                    </Icon>
                    Share
                    <Chevron color="#0a0a0a" />
                </Share>
            </TabRow>
            <Ribbon />
            <FormulaBar />
            <Sheet />
            <SheetTabs />
            <StatusBar />
            <Taskbar />
            <Watermark dir="rtl">خ‍5‍سات</Watermark>
        </Page>
    );
}

export default App;

const GlobalStyle = createGlobalStyle`
    * {
        box-sizing: border-box;
    }
    body {
        margin: 0;
        background: #0a0a0a;
    }
    button, input, select {
        font: inherit;
        color: inherit;
        background: none;
        border: 0;
        padding: 0;
        margin: 0;
        outline: 0;
    }
`;

const Page = styled.div`
    position: relative;
    height: 100vh;
    display: flex;
    flex-direction: column;
    overflow: hidden;
    background: linear-gradient(90deg, #0a0a0a 45%, #150e0d 70%, #0a0a0a 95%);
    color: #fff;
    font-family: "Open Sans", "Noto Sans", sans-serif;
    font-size: 11px;
`;

const TitleRow = styled.header`
    display: grid;
    grid-template-columns: 784px minmax(200px, 368px) 1fr;
    align-items: center;
    height: 48px;
`;

const TitleLeft = styled.div`
    display: flex;
    align-items: center;
    padding-left: 16px;
`;

const AutoSave = styled.div`
    display: flex;
    align-items: center;
    gap: 7px;
    margin: 0 5px 0 16px;
`;

const Toggle = styled.label`
    display: flex;
    align-items: center;
    gap: 5px;
    width: 45px;
    height: 20px;
    padding-left: 3px;
    border: 1px solid #fff;
    border-radius: 10px;
    background: #292929;
    input {
        appearance: none;
        width: 14px;
        height: 14px;
        border-radius: 50%;
        background: #fff;
    }
`;

const QuickButton = styled.button`
    display: grid;
    place-items: center;
    width: ${(p) => p.$w}px;
    height: 24px;
`;

const DropButton = styled.button`
    display: grid;
    place-items: center;
    width: 14px;
    height: 24px;
`;

const FileName = styled.button`
    display: flex;
    align-items: center;
    gap: 4px;
    margin-left: 19px;
`;

const SearchBox = styled.label`
    display: flex;
    align-items: center;
    gap: 13px;
    height: 32px;
    padding-left: 13px;
    border: 1px solid #707070;
    border-radius: 4px;
    background: #1f1f1f;
    font-size: 12px;
    input {
        flex: 1;
        min-width: 0;
        &::placeholder {
            color: #a8a8a8;
        }
    }
`;

const WindowButtons = styled.div`
    display: flex;
    justify-content: flex-end;
    align-items: center;
`;

const Avatar = styled.button`
    display: grid;
    place-items: center;
    width: 24px;
    height: 24px;
    margin-right: 11px;
    border-radius: 50%;
    background: #d6d6d6;
    overflow: hidden;
`;

const WindowButton = styled.button`
    display: grid;
    place-items: center;
    width: 48px;
    height: 48px;
    background: ${(p) => (p.$close ? "#e81520" : "none")};
`;

const TabRow = styled.nav`
    display: flex;
    align-items: center;
    gap: 22px;
    height: 30px;
    padding: 0 11px 0 22px;
    font-size: 12px;
`;

const TabButton = styled.button`
    position: relative;
    height: 24px;
    font-weight: ${(p) => (p.$on ? 700 : 400)};
    white-space: nowrap;
    &:first-child {
        margin-right: 5px;
    }
    &::after {
        content: "";
        display: ${(p) => (p.$on ? "block" : "none")};
        position: absolute;
        left: 0;
        right: 0;
        bottom: 0;
        height: 2px;
        background: #4fc08d;
    }
`;

const Comments = styled.button`
    display: flex;
    align-items: center;
    gap: 4px;
    height: 24px;
    margin-left: auto;
    padding: 0 6px 0 5px;
    border: 1px solid #707070;
    border-radius: 4px;
    background: #292929;
`;

const Share = styled(Comments)`
    gap: 5px;
    margin-left: -14px;
    padding: 0 5px 0 4px;
    border-color: #38a35c;
    background: #38a35c;
    color: #0a0a0a;
`;

const RibbonBox = styled.section`
    display: flex;
    flex: none;
    height: 100px;
    margin: 0 7px 0 8px;
    padding: 5px 0 3px;
    border-radius: 8px;
    background: #292929;
`;

const GroupBox = styled.div`
    position: relative;
    display: flex;
    flex-direction: column;
    flex: none;
    width: ${(p) => p.$w}px;
    &::after {
        content: "";
        position: absolute;
        top: 0;
        right: 0;
        bottom: 3px;
        width: 1px;
        background: #666;
    }
`;

const GroupBody = styled.div`
    display: flex;
    flex: 1;
    align-items: flex-start;
`;

const GroupName = styled.div`
    position: relative;
    height: 14px;
    padding-right: ${(p) => (p.$launcher ? 16 : 0)}px;
    line-height: 14px;
    text-align: center;
    white-space: nowrap;
`;

const LauncherButton = styled.button`
    position: absolute;
    right: 4px;
    top: 3px;
`;

const Inset = styled.div`
    display: flex;
    padding-left: ${(p) => p.$left}px;
`;

const BigButton = styled.button`
    display: flex;
    flex-direction: column;
    align-items: center;
    width: ${(p) => p.$w}px;
    padding-top: 4px;
    span {
        display: flex;
        align-items: center;
        gap: 4px;
        min-height: 16px;
        line-height: 16px;
        white-space: nowrap;
    }
`;

const BigIcon = styled.div`
    display: grid;
    place-items: center;
    height: 30px;
    margin-bottom: 3px;
`;

const SortIcon = styled.div`
    display: flex;
    align-items: center;
    gap: 2px;
    p {
        margin: 0;
        font-size: 14px;
        line-height: 14px;
        color: #d6d6d6;
    }
    b {
        font-weight: 400;
        color: #3a96dd;
    }
`;

const SmallColumn = styled.div`
    width: ${(p) => (p.$w ? `${p.$w}px` : "auto")};
    margin: -2px 0 0 ${(p) => p.$left}px;
`;

const SmallButton = styled.button`
    display: flex;
    align-items: center;
    gap: 4px;
    height: 26px;
    white-space: nowrap;
    & > svg:last-child {
        margin-left: ${(p) => p.$gap || 0}px;
    }
`;

const TextIcon = styled.span`
    display: flex;
    flex-direction: column;
    align-items: ${(p) => (p.$end ? "flex-end" : "flex-start")};
    width: 16px;
    font-size: 9px;
    line-height: 9px;
    color: #d6d6d6;
    span {
        display: flex;
        align-items: center;
    }
`;

const ToolRows = styled.div`
    display: flex;
    flex-direction: column;
    gap: 8px;
    padding: 7px 0 0 ${(p) => p.$left}px;
`;

const ToolRow = styled.div`
    display: flex;
    align-items: center;
    height: 24px;
`;

const ComboBox = styled.div`
    display: flex;
    align-items: center;
    width: ${(p) => p.$w}px;
    height: 24px;
    padding: 0 2px;
    border: 1px solid #6e6e6e;
    border-radius: 4px;
    & + & {
        margin-left: 2px;
    }
    select {
        flex: 1;
        min-width: 0;
        appearance: none;
    }
`;

const ToolButton = styled.button`
    display: grid;
    place-items: center;
    width: ${(p) => p.$w}px;
    height: 24px;
    border: ${(p) => (p.$on ? "1px solid #8a8a8a" : "0")};
    border-radius: 4px;
    background: ${(p) => (p.$on ? "#383838" : "none")};
`;

const Letter = styled(ToolButton)`
    color: #d6d6d6;
    font-size: ${(p) => p.$size || 13}px;
    font-weight: ${(p) => (p.$bold ? 700 : 400)};
    font-style: ${(p) => (p.$italic ? "italic" : "normal")};
    font-family: ${(p) => (p.$italic ? '"Liberation Serif", serif' : "inherit")};
    text-decoration: ${(p) => (p.$underline ? "underline" : "none")};
    text-underline-offset: 2px;
`;

const Sep = styled.i`
    width: 1px;
    height: 24px;
    margin: 0 2px;
    background: #5c5c5c;
`;

const LongSep = styled(Sep)`
    height: 62px;
    margin: 6px 0 0 7px;
`;

const Gallery = styled.div`
    display: flex;
    width: 239px;
    height: 62px;
    margin: 7px 0 0 4px;
    border: 1px solid #6e6e6e;
    border-radius: 4px;
`;

const GalleryTiles = styled.div`
    display: grid;
    grid-template-columns: 1fr 1fr;
    flex: 1;
    gap: 6px;
    padding: 5px 4px;
`;

const StyleTile = styled.button`
    padding-left: 4px;
    background: ${(p) => p.$bg};
    color: ${(p) => p.$color};
    outline: ${(p) => (p.$on ? "1px solid #b0b0b0" : "0")};
    outline-offset: 2px;
    font-size: 13px;
    line-height: 20px;
    text-align: left;
`;

const GalleryMore = styled.button`
    display: grid;
    place-items: center;
    width: 24px;
    border: 1px solid #9a9a9a;
    border-radius: 0 4px 4px 0;
`;

const Collapse = styled.button`
    display: flex;
    flex: 1;
    align-items: flex-end;
    justify-content: flex-end;
    padding: 0 9px 5px 0;
`;

const FormulaRow = styled.div`
    display: flex;
    flex: none;
    align-items: center;
    height: 26px;
    margin: 8px 7px 7px 8px;
`;

const Field = styled.div`
    display: flex;
    align-items: center;
    height: 26px;
    border: 1px solid #6a6a6a;
    border-radius: 5px;
    background: #292929;
`;

const NameBox = styled(Field)`
    width: 102px;
    padding: 0 5px 0 6px;
    font-size: 12px;
    input {
        flex: 1;
        min-width: 0;
    }
`;

const Dots = styled.div`
    display: flex;
    flex-direction: column;
    align-items: center;
    gap: 2px;
    width: 20px;
    i {
        width: 2px;
        height: 2px;
        background: #e6e6e6;
    }
`;

const FormulaTools = styled(Field)`
    width: 86px;
    padding: 0 2px 0 6px;
    justify-content: space-between;
    button {
        display: flex;
        align-items: center;
        gap: 3px;
    }
    em {
        font-family: "Liberation Serif", serif;
        font-size: 18px;
        color: #d6d6d6;
    }
`;

const FormulaInput = styled(Field)`
    flex: 1;
    margin-left: 4px;
    padding-right: 3px;
    input {
        flex: 1;
    }
`;

const SheetArea = styled.main`
    display: flex;
    flex: 1;
    min-height: 0;
`;

const SheetScroll = styled.div`
    flex: 1;
    min-width: 0;
    overflow: hidden;
`;

const Table = styled.table`
    table-layout: fixed;
    width: 1px;
    border-spacing: 0;
    background: #0a0a0a;
`;

const Col = styled.col`
    width: ${(p) => p.$w}px;
`;

const ColHead = styled.th`
    height: 11px;
    padding: 0;
    border-right: 1px solid #555;
    border-bottom: 1px solid ${(p) => (p.$active ? "#107c41" : "#a8a8a8")};
    background: ${(p) => (p.$active ? "#666" : "#0a0a0a")};
    color: #e0e0e0;
    font-family: "Liberation Sans", sans-serif;
    font-size: 8px;
    line-height: 10px;
    font-weight: 400;
`;

const Corner = styled(ColHead)`
    svg {
        margin: 3px 0 0 14px;
    }
`;

const Row = styled.tr`
    height: ${(p) => p.$h}px;
`;

const RowHead = styled.th`
    padding: 0;
    border-right: 1px solid #a8a8a8;
    border-bottom: 1px solid #444;
    background: #0a0a0a;
    color: #e0e0e0;
    font-family: "Liberation Sans", sans-serif;
    font-size: 8px;
    line-height: 9px;
    font-weight: 400;
    vertical-align: bottom;
`;

const Cell = styled.td`
    position: relative;
    padding: ${(p) => (p.$level ? 1 : 0)}px 0 0 2px;
    border-right: 1px solid #dcdcdc;
    border-bottom: 1px solid #dcdcdc;
    background: #fff;
    color: #1a1a1a;
    font-family: Lato, sans-serif;
    font-size: 11px;
    vertical-align: top;
`;

const IdCell = styled(Cell)`
    border-color: #f00;
    background: #f00;
    color: #000;
    font-family: Inter, sans-serif;
    font-weight: 700;
    line-height: 13px;
`;

const TextLine = styled.div`
    height: 15px;
    line-height: 13px;
    white-space: pre;
`;

const Redacted = styled.span`
    display: inline-block;
    width: ${(p) => p.$w}px;
    height: 14px;
    background: #000;
    vertical-align: top;
`;

const Mask = styled.div`
    position: absolute;
    z-index: 1;
    left: ${(p) => p.$box.left}px;
    top: ${(p) => p.$box.top}px;
    width: ${(p) => p.$box.width}px;
    height: ${(p) => p.$box.height}px;
    background: #000;
`;

const VerticalBar = styled.div`
    display: flex;
    flex-direction: column;
    align-items: center;
    width: 20px;
    padding: 4px 0 1px;
    background: #111;
`;

const VerticalThumb = styled.div`
    width: 9px;
    height: 88px;
    margin: 98px 0 auto;
    border-radius: 5px;
    background: #9c9c9c;
`;

const SheetTabRow = styled.div`
    display: flex;
    flex: none;
    align-items: center;
    height: 32px;
    border-top: 1px solid #444;
    background: linear-gradient(90deg, #0a0a0a 12%, #170d0c 22%, #170d0c 55%, #211715 75%, #100c0b 98%);
`;

const SheetNav = styled.div`
    display: flex;
    gap: 27px;
    width: 116px;
    padding-left: 28px;
`;

const SheetTab = styled.button`
    align-self: flex-start;
    height: 28px;
    padding: 0 8px;
    border-radius: 0 0 4px 4px;
    background: #fff;
    color: #262626;
    font-size: 13px;
    font-weight: 600;
    span {
        display: block;
        height: 24px;
        line-height: 22px;
        border-bottom: 2px solid #1e7145;
    }
`;

const AddSheet = styled.button`
    height: 18px;
    margin: 0 auto 0 4px;
    padding-left: 42px;
    border-left: 1px solid #5c5c5c;
`;

const HorizontalBar = styled.div`
    display: flex;
    align-items: center;
    flex: 0 1 729px;
    gap: 5px;
    height: 18px;
    margin: 0 18px 0 8px;
    padding: 0 6px 0 4px;
    border-radius: 9px;
    background: #111;
`;

const HorizontalThumb = styled.div`
    flex: 1;
    height: 9px;
    margin-right: 11px;
    border-radius: 5px;
    background: #9c9c9c;
`;

const StatusRow = styled.footer`
    display: flex;
    flex: none;
    align-items: center;
    height: 22px;
    padding: 0 7px 0 11px;
    border-top: 1px solid #444;
    background: #141414;
    font-weight: 600;
    line-height: 20px;
`;

const Accessibility = styled.button`
    display: flex;
    align-items: center;
    gap: 2px;
    margin: 0 auto 0 18px;
`;

const ViewButton = styled.button`
    display: grid;
    place-items: center;
    width: 40px;
    height: 21px;
    background: ${(p) => (p.$on ? "#262626" : "none")};
`;

const Zoom = styled.div`
    display: flex;
    align-items: center;
    margin-left: 6px;
    font-weight: 400;
    input {
        appearance: none;
        width: 100px;
        height: 12px;
        margin: 0 5px;
        background:
            linear-gradient(#aaa, #aaa) 50% 50% / 1px 6px no-repeat,
            linear-gradient(#aaa, #aaa) 0 50% / 100% 1px no-repeat;
    }
    input::-webkit-slider-thumb {
        appearance: none;
        width: 4px;
        height: 11px;
        background: #b5b5b5;
    }
    span {
        margin-left: 12px;
    }
`;

const TaskRow = styled.footer`
    display: grid;
    grid-template-columns: 1fr auto 1fr;
    flex: none;
    align-items: center;
    height: 47px;
    border-top: 1px solid #444;
    background: linear-gradient(
        90deg,
        #202020 17%,
        #2d1f1d 26%,
        #2f1f1d 42%,
        #2a2120 62%,
        #33221f 76%,
        #302221 88%,
        #202020 93%
    );
`;

const Apps = styled.div`
    display: flex;
    gap: 4px;
`;

const AppButton = styled.button`
    position: relative;
    display: grid;
    place-items: center;
    width: 40px;
    height: 40px;
    border-radius: 4px;
    background: ${(p) => (p.$alert ? "#8a3a40" : p.$active ? "#3d302e" : "none")};
`;

const Badge = styled.span`
    position: absolute;
    right: 4px;
    top: 3px;
    min-width: 14px;
    height: 14px;
    border-radius: 7px;
    background: ${(p) => (p.$blue ? "#4cb4f8" : "#ee4b3c")};
    color: ${(p) => (p.$blue ? "#123" : "#fff")};
    font-size: 9px;
    line-height: 14px;
`;

const Running = styled.i`
    position: absolute;
    left: 50%;
    bottom: 0;
    width: ${(p) => (p.$alert ? 32 : p.$active ? 16 : 6)}px;
    height: 3px;
    border-radius: 2px;
    background: ${(p) => (p.$alert ? "#ff8087" : p.$active ? "#4cb4f8" : "#9c9c9c")};
    transform: translateX(-50%);
`;

const Tray = styled.div`
    display: flex;
    justify-content: flex-end;
    align-items: center;
    padding-right: 19px;
    & > span {
        margin: 0 18px 0 20px;
    }
`;

const TrayIcons = styled.div`
    display: flex;
    gap: 6px;
    margin-right: 18px;
`;

const Clock = styled.div`
    display: flex;
    flex-direction: column;
    align-items: flex-end;
    margin-right: 10px;
    line-height: 16px;
`;

const Watermark = styled.div`
    position: absolute;
    left: 50%;
    bottom: 16px;
    transform: translateX(-50%);
    color: rgba(150, 150, 150, 0.5);
    font-family: "DejaVu Sans", sans-serif;
    font-size: 62px;
    line-height: 60px;
    font-weight: 700;
    white-space: nowrap;
    pointer-events: none;
`;
